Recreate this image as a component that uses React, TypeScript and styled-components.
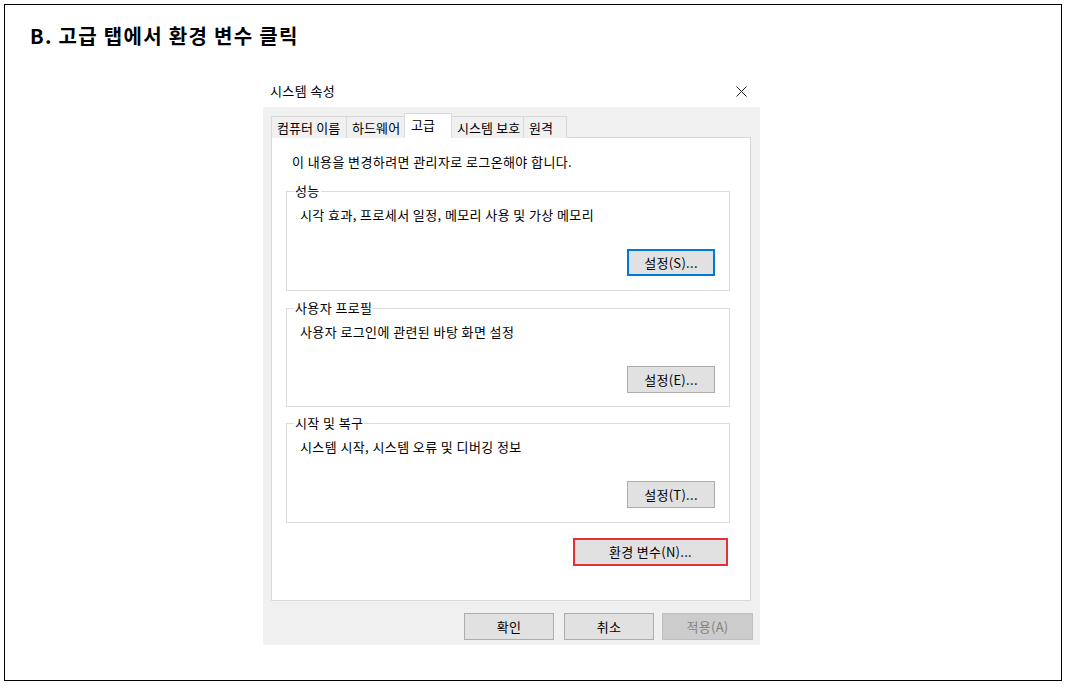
import React from "react";
import styled, { createGlobalStyle } from "styled-components";

const Global = createGlobalStyle`
  html, body { margin: 0; padding: 0; background: #fff; }
  body { font-family: "Noto Sans CJK KR", "Noto Sans", sans-serif; color: #000; }
  * { box-sizing: border-box; }
`;

const Frame = styled.div`
  margin: 4px;
  width: 1058px;
  height: 677px;
  border: 1px solid #000;
  padding: 19px 0 0 25px;
`;

const Heading = styled.h1`
  margin: 0;
  font-size: 20px;
  line-height: 24px;
  font-weight: 700;
  letter-spacing: 1.3px;
`;

const Dialog = styled.div`
  width: 497px;
  margin: 27px 0 0 233px;
  font-size: 13px;
  line-height: 16px;
  letter-spacing: 0.4px;
`;

const TitleBar = styled.div`
  height: 32px;
  display: flex;
  align-items: center;
  justify-content: space-between;
  padding: 0 13px 0 7px;
  background: #fff;
`;

const Title = styled.span`
  color: #000;
`;

const Body = styled.div`
  background: #f0f0f0;
  padding: 6px 9px 5px 8px;
`;

const TabRow = styled.div`
  display: flex;
  align-items: flex-end;
  height: 25px;
  margin-bottom: -1px;
`;

const Tab = styled.div<{ $w: number; $active?: boolean }>`
  width: ${(p) => p.$w}px;
  height: ${(p) => (p.$active ? 25 : 22)}px;
  padding: 3px 0 0 ${(p) => (p.$active ? 6 : 5)}px;
  border: 1px solid #d9d9d9;
  border-bottom: none;
  margin-left: -1px;
  background: ${(p) => (p.$active ? "#fff" : "#f0f0f0")};
  white-space: nowrap;
  overflow: hidden;
  letter-spacing: 0.1px;
  position: ${(p) => (p.$active ? "relative" : "static")};
  z-index: ${(p) => (p.$active ? 1 : 0)};
  &:first-child { margin-left: 0; }
`;

const Panel = styled.div`
  height: 464px;
  background: #fff;
  border: 1px solid #d9d9d9;
  padding: 16px 20px 0 14px;
  display: flex;
  flex-direction: column;
`;

const Intro = styled.div`
  margin-left: 6px;
  margin-bottom: 21px;
`;

const Group = styled.div<{ $h: number; $mb: number }>`
  height: ${(p) => p.$h}px;
  margin-bottom: ${(p) => p.$mb}px;
  border: 1px solid #dcdcdc;
  padding: 0 14px 0 7px;
  display: flex;
  flex-direction: column;
`;

const Legend = styled.span`
  align-self: flex-start;
  margin-top: -9px;
  padding: 0 1px;
  background: #fff;
`;

const Desc = styled.div`
  margin: 8px 0 0 6px;
`;

const Button = styled.button<{ $w: number; $h?: number; $variant?: "focus" | "red" | "disabled" }>`
  width: ${(p) => p.$w}px;
  height: ${(p) => p.$h ?? 27}px;
  font-family: inherit;
  font-size: 13px;
  line-height: 16px;
  letter-spacing: 0.3px;
  padding: 0;
  background: ${(p) => (p.$variant === "disabled" ? "#cccccc" : "#e1e1e1")};
  color: ${(p) => (p.$variant === "disabled" ? "#838383" : "#000")};
  border: ${(p) =>
    p.$variant === "focus"
      ? "2px solid #0078d7"
      : p.$variant === "red"
      ? "2px solid #e5303a"
      : p.$variant === "disabled"
      ? "1px solid #bfbfbf"
      : "1px solid #adadad"};
  cursor: default;
`;

const GroupButton = styled(Button)`
  align-self: flex-end;
  margin-top: 26px;
`;

const EnvButton = styled(Button)`
  align-self: flex-end;
  margin-right: 2px;
`;

const Footer = styled.div`
  display: flex;
  justify-content: flex-end;
  margin-top: 12px;
  margin-right: -2px;
`;

const FooterButton = styled(Button)<{ $ml: number }>`
  margin-left: ${(p) => p.$ml}px;
`;

const CloseIcon = () => (
  <svg width="11" height="11" viewBox="0 0 11 11">
    <path d="M0.5 0.5 L10.5 10.5 M10.5 0.5 L0.5 10.5" stroke="#222" strokeWidth="1" fill="none" />
  </svg>
);

export default function App() {
  return (
    <>
      <Global />
      <Frame>
        <Heading>B. 고급 탭에서 환경 변수 클릭</Heading>
        <Dialog>
          <TitleBar>
            <Title>시스템 속성</Title>
            <CloseIcon />
          </TitleBar>
          <Body>
            <TabRow>
              <Tab $w={76}>컴퓨터 이름</Tab>
              <Tab $w={59}>하드웨어</Tab>
              <Tab $w={48} $active>고급</Tab>
              <Tab $w={73}>시스템 보호</Tab>
              <Tab $w={44}>원격</Tab>
            </TabRow>
            <Panel>
              <Intro>이 내용을 변경하려면 관리자로 로그온해야 합니다.</Intro>
              <Group $h={100} $mb={17}>
                <Legend>성능</Legend>
                <Desc>시각 효과, 프로세서 일정, 메모리 사용 및 가상 메모리</Desc>
                <GroupButton $w={88} $variant="focus">설정(S)...</GroupButton>
              </Group>
              <Group $h={99} $mb={16}>
                <Legend>사용자 프로필</Legend>
                <Desc>사용자 로그인에 관련된 바탕 화면 설정</Desc>
                <GroupButton $w={88}>설정(E)...</GroupButton>
              </Group>
              <Group $h={100} $mb={15}>
                <Legend>시작 및 복구</Legend>
                <Desc>시스템 시작, 시스템 오류 및 디버깅 정보</Desc>
                <GroupButton $w={88}>설정(T)...</GroupButton>
              </Group>
              <EnvButton $w={155} $h={28} $variant="red">환경 변수(N)...</EnvButton>
            </Panel>
            <Footer>
              <FooterButton $w={90} $ml={0}>확인</FooterButton>
              <FooterButton $w={90} $ml={10}>취소</FooterButton>
              <FooterButton $w={91} $ml={8} $variant="disabled">적용(A)</FooterButton>
            </Footer>
          </Body>
        </Dialog>
      </Frame>
    </>
  );
}
